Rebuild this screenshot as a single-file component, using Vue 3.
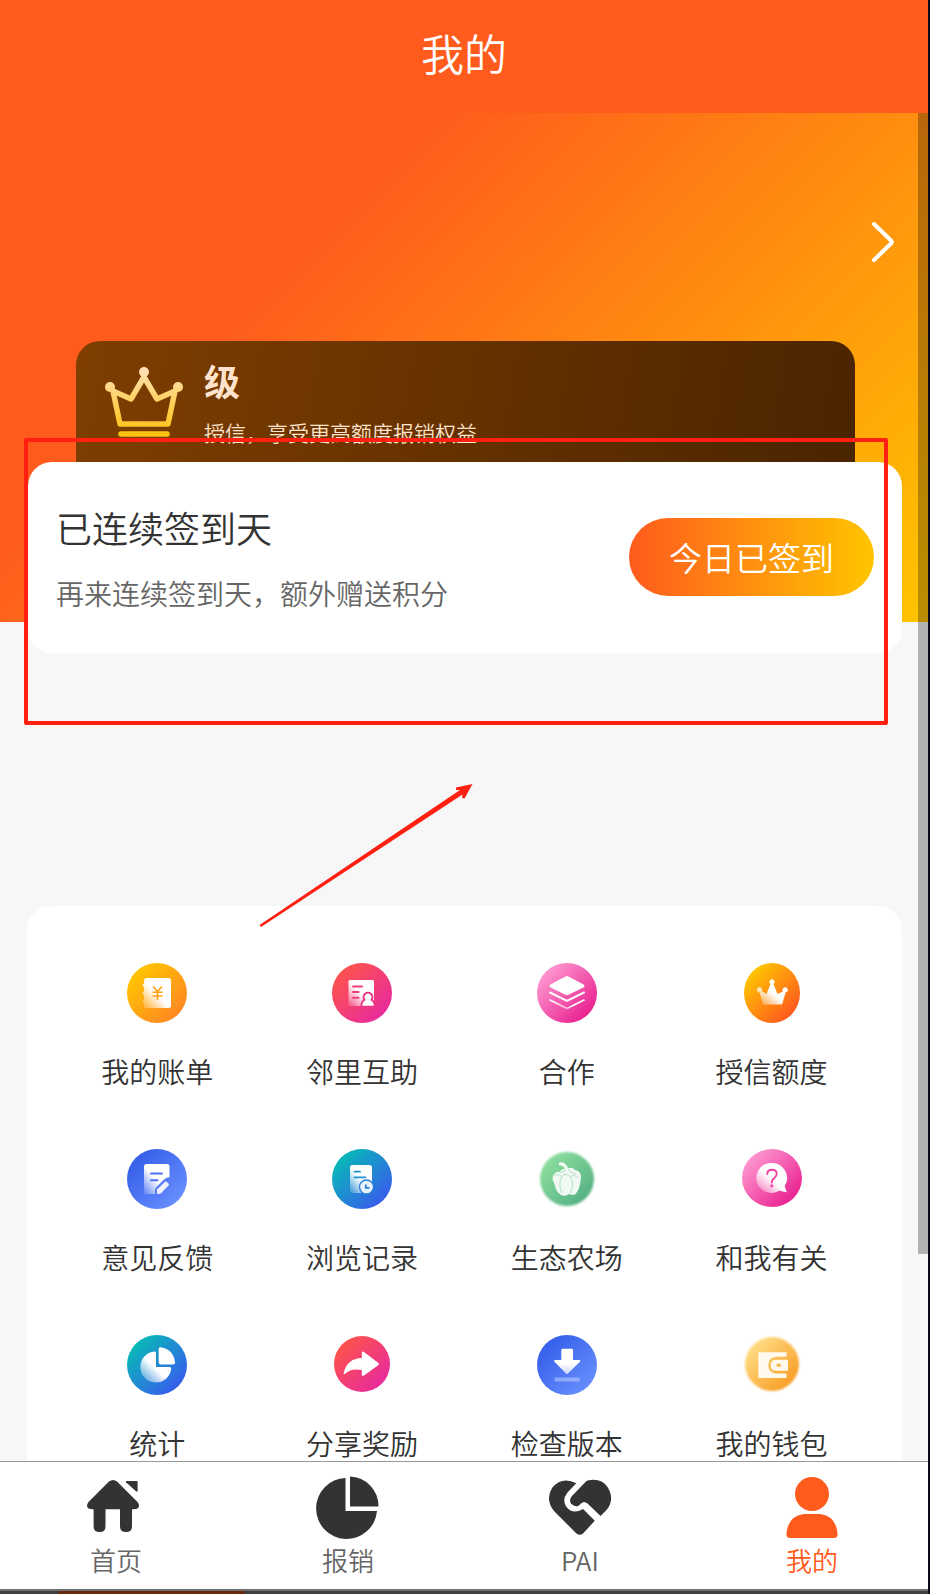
<script setup>
const services = [
  { id: 'bill', label: '我的账单', from: '#ffc800', to: '#ff8525' },
  { id: 'neighbor', label: '邻里互助', from: '#ff5548', to: '#e829a0' },
  { id: 'coop', label: '合作', from: '#ff9dd2', to: '#e81c8e' },
  { id: 'credit', label: '授信额度', from: '#ffcb00', to: '#ff5320', rx: 28 },
  { id: 'feedback', label: '意见反馈', from: '#325ce8', to: '#6a90ff' },
  { id: 'history', label: '浏览记录', from: '#05bdb5', to: '#3a58ef' },
  { id: 'farm', label: '生态农场', from: '#8fdf9e', to: '#53b083', rx: 27, ry: 27, soft: true },
  { id: 'related', label: '和我有关', from: '#ff9dd2', to: '#e81c8e', ry: 29, cy: 29 },
  { id: 'stats', label: '统计', from: '#05bdb5', to: '#3a58ef' },
  { id: 'share', label: '分享奖励', from: '#ff5548', to: '#e829a0', rx: 28, ry: 28, cy: 29 },
  { id: 'version', label: '检查版本', from: '#325ce8', to: '#6a90ff' },
  { id: 'wallet', label: '我的钱包', from: '#ffe08a', to: '#f89a20', rx: 27, ry: 27, cy: 29, soft: true },
]

const tabs = [
  { id: 'home', label: '首页' },
  { id: 'claim', label: '报销' },
  { id: 'pai', label: 'PAI' },
  { id: 'mine', label: '我的', active: true },
]
</script>

<template>
  <div class="screen">
    <header class="titlebar">
      <h1>我的</h1>
    </header>

    <main class="content">
      <section class="hero">
        <div class="profile">
          <button class="profile-link" type="button" aria-label="个人资料">
            <svg width="24" height="42" viewBox="0 0 24 42" fill="none" stroke="#fff" stroke-width="4" stroke-linecap="round" stroke-linejoin="round">
              <path d="M3 3 L20 19.500 Q21.500 21 20 22.500 L3 39" />
            </svg>
          </button>
        </div>
        <div class="member">
          <svg class="crown" width="78" height="72" viewBox="0 0 78 72">
            <defs>
              <linearGradient id="gold" gradientUnits="userSpaceOnUse" x1="0" y1="0" x2="0" y2="72">
                <stop offset="0" stop-color="#ffe2c0" />
                <stop offset=".55" stop-color="#ffcf55" />
                <stop offset="1" stop-color="#ffc107" />
              </linearGradient>
            </defs>
            <g fill="url(#gold)">
              <circle cx="39" cy="6" r="5" />
              <circle cx="5" cy="21" r="5" />
              <circle cx="73" cy="21" r="5" />
            </g>
            <g fill="none" stroke="url(#gold)" stroke-width="5.500" stroke-linejoin="round" stroke-linecap="round">
              <path d="M8 25 L15 58 H63 L70 25 L52 33 L39 11 L26 33 Z" />
              <path d="M16 68 H62" />
            </g>
          </svg>
          <div class="member-text">
            <strong>级</strong>
            <span>授信，享受更高额度报销权益</span>
          </div>
        </div>
      </section>

      <section class="checkin">
        <div class="checkin-text">
          <h2>已连续签到天</h2>
          <p>再来连续签到天，额外赠送积分</p>
        </div>
        <button class="checkin-button" type="button">今日已签到</button>
      </section>

      <section class="services">
        <a v-for="s in services" :key="s.id" class="service" href="#">
          <svg class="service-icon" viewBox="0 0 60 60">
            <defs>
              <linearGradient :id="'bg-' + s.id" x1=".1" y1=".1" x2=".9" y2=".9">
                <stop offset="0" :stop-color="s.from" />
                <stop offset="1" :stop-color="s.to" />
              </linearGradient>
              <linearGradient :id="'fg-' + s.id" x1="0" y1="1" x2=".6" y2=".4">
                <stop offset="0" stop-color="#fff" stop-opacity=".1" />
                <stop offset=".8" stop-color="#fff" />
              </linearGradient>
            </defs>
            <ellipse :class="{ soft: s.soft }" cx="30" :cy="s.cy || 30" :rx="s.rx || 30" :ry="s.ry || 30" :fill="`url(#bg-${s.id})`" />

            <g v-if="s.id === 'bill'">
              <path fill="url(#fg-bill)" d="M20 15 H41.500 Q44 15 44 17.500 V42.500 Q44 45 41.500 45 H17 V40 a1.800 1.800 0 0 1 0 -3.500 V32 a1.800 1.800 0 0 1 0 -3.500 V24 a1.800 1.800 0 0 1 0 -3.500 V18 Q17 15 20 15 Z" />
              <path d="M26 23.500 L30.500 28.500 L35 23.500 M30.500 28.500 V37 M25.500 29.300 H35.500 M25.500 33 H35.500" fill="none" stroke="#ffa216" stroke-width="1.600" />
            </g>

            <g v-else-if="s.id === 'neighbor'">
              <rect x="16.500" y="17" width="25.500" height="26" rx="1.500" fill="url(#fg-neighbor)" />
              <path d="M21 23.400 H30 M21 29 H26.500 M21 34.700 H26.500" stroke="#f03b7e" stroke-width="2" stroke-linecap="round" />
              <path d="M36 30.500 a3.800 3.800 0 0 1 2.200 6.700 Q41.800 38.500 41.800 42.800 H30.200 Q30.200 38.500 33.800 37.200 a3.800 3.800 0 0 1 2.200 -6.700 Z" fill="none" stroke="#ee3487" stroke-width="3.600" />
              <path d="M36 30.500 a3.800 3.800 0 0 1 2.200 6.700 Q41.800 38.500 41.800 42.800 H30.200 Q30.200 38.500 33.800 37.200 a3.800 3.800 0 0 1 2.200 -6.700 Z" fill="#fff" />
            </g>

            <g v-else-if="s.id === 'coop'">
              <path d="M28.500 13.500 Q30 12.700 31.500 13.500 L46.500 21.500 Q48.500 23 46.500 24.500 L31.500 31.800 Q30 32.600 28.500 31.800 L13.500 24.500 Q11.500 23 13.500 21.500 Z" fill="#fff" />
              <path d="M13 29.500 L30 38 L47 29.500" fill="none" stroke="#fff" stroke-width="2" stroke-linecap="round" />
              <path d="M13 37 L30 45.500 L47 37" fill="none" stroke="url(#fg-coop)" stroke-width="1.600" stroke-linecap="round" />
            </g>

            <g v-else-if="s.id === 'credit'" fill="url(#fg-credit)">
              <path d="M18 27 L24.500 31 L28.500 21 a2.500 2.500 0 1 1 3 0 L35.500 31 L41 28.500 a2.600 2.600 0 1 1 2.600 1 L40 41.500 H21 L17.500 29.500 a2.600 2.600 0 1 1 2 -1 Z" />
            </g>

            <g v-else-if="s.id === 'feedback'">
              <path d="M19.500 15 H40 Q42.500 15 42.500 17.500 V28 Q39 28.500 37 30.500 L29 38.500 Q27.800 40 28 45 H17 V17.500 Q17 15 19.500 15 Z" fill="url(#fg-feedback)" />
              <path d="M24 24.400 H35 M24 31.300 H30.500" stroke="#4b74f3" stroke-width="2" stroke-linecap="round" />
              <path d="M30 45 V40.500 L38 32.800 Q39 32 40 33 L41.500 34.500 Q42.500 35.500 41.500 36.500 L34 44.200 Q33 45 31.500 45 Z" fill="#fff" opacity=".9" />
            </g>

            <g v-else-if="s.id === 'history'">
              <rect x="18" y="16" width="22" height="28" rx="2.500" fill="url(#fg-history)" />
              <path d="M22.500 22.700 H28 M22.500 28.300 H33.500" stroke="#1f91cd" stroke-width="1.800" stroke-linecap="round" />
              <circle cx="34.500" cy="38" r="7" fill="#e9f3fb" stroke="#2a80d9" stroke-width="1.400" />
              <path d="M33.800 35.500 V38.800 H37.500" fill="none" stroke="#2a80d9" stroke-width="1.800" />
            </g>

            <g v-else-if="s.id === 'farm'">
              <path d="M22 13.500 Q28 12 31 19 Q36 18 38 21 Q44 22 44 28 Q43 41 38.500 45 Q36 47 32.500 45 Q28 48 24 46 Q19 43 17.500 35 Q14 29 17 25 Q20 22 22.500 23 Q24 20 28 19.500 Q26.500 16.500 22 16 Z" fill="#f0f9f3" />
              <path d="M17 27 Q21 24 24.500 27.500 Q29 23.500 33.500 27.500 Q37 25 42 29 M24.500 27.500 Q21 36 25 44 M33.500 27.500 Q38 35 33 44 M22.500 23 Q27 24 28.500 20 M31 20 Q34 25 39 25" fill="none" stroke="#a5d8b9" stroke-width=".8" />
            </g>

            <g v-else-if="s.id === 'related'">
              <path d="M30 14 a15 15 0 0 1 12.700 23 Q43.500 40 44.800 43.200 L37 41.800 A15 15 0 1 1 30 14 Z" fill="url(#fg-related)" />
              <path d="M25.300 25 Q25.300 20.800 30 20.800 Q34.700 20.800 34.700 25 Q34.700 27 32 29.300 Q29.800 31 29.800 33.500" fill="none" stroke="#f03f9c" stroke-width="1.900" stroke-linecap="round" />
              <circle cx="29.700" cy="36.800" r="1.500" fill="#f03f9c" />
            </g>

            <g v-else-if="s.id === 'stats'">
              <path d="M27.500 16.500 Q29 16.500 29 18 V32 H42.500 Q44.500 32 44.200 34 A15.500 15.500 0 1 1 27.500 16.500 Z" fill="url(#fg-stats)" />
              <path d="M31.700 14 Q31.700 12 33.800 12.300 Q46.500 14.500 48 27.300 Q48.200 29.400 46.200 29.400 H33.500 Q31.700 29.400 31.700 27.600 Z" fill="#fff" />
            </g>

            <g v-else-if="s.id === 'share'">
              <path d="M29.800 17.800 Q30.200 15.900 32 17 L46.500 28 Q47.500 29 46.500 30 L32 40.600 Q30.200 41.800 29.800 40 V35 Q19 33 13 38.800 Q11.500 39.800 11.700 38 Q15 23.500 29.800 23 Z" fill="#fff" />
            </g>

            <g v-else-if="s.id === 'version'">
              <path d="M25.500 13.700 H34.800 Q36 13.700 36 15 V25 H42.500 Q44 25.200 43 26.700 L31 38.500 Q30 39.500 29 38.500 L17.500 26.700 Q16.500 25.200 18 25 H24.300 V15 Q24.300 13.700 25.500 13.700 Z" fill="url(#fg-arrow)" />
              <rect x="17.500" y="42.500" width="25.300" height="4" rx="1" fill="#fff" opacity=".35" />
              <defs>
                <linearGradient id="fg-arrow" x1="0" y1="0" x2="0" y2="1">
                  <stop offset=".6" stop-color="#fff" />
                  <stop offset="1" stop-color="#fff" stop-opacity=".7" />
                </linearGradient>
              </defs>
            </g>

            <g v-else>
              <path d="M16.300 17.300 H44.500 V21.800 H35 Q26.300 22 26.300 30 Q26.300 38.300 35 38.500 H44.500 V43 H16.300 Z" fill="#fff9ee" />
              <path fill-rule="evenodd" d="M34 24.700 H46 V35.700 H34 Q28.700 35.700 28.700 30.200 Q28.700 24.700 34 24.700 Z M34.600 28.700 V31.800 H38.800 V28.700 Z" fill="#fff9ee" />
            </g>
          </svg>
          <span>{{ s.label }}</span>
        </a>
      </section>

      <div class="scroll-thumb"></div>
    </main>

    <nav class="tabbar">
      <a v-for="t in tabs" :key="t.id" class="tab" :class="{ active: t.active }" href="#">
        <svg class="tab-icon" viewBox="0 0 64 64" fill="currentColor">
          <g v-if="t.id === 'home'">
            <path d="M25 5.500 Q29 2.500 33 5.500 L53.500 26 Q56.500 30 53.500 32.500 Q52.500 33.300 48 33.300 V50.500 Q48 56 42 56 Q36 56 36 50.500 V33.300 H21.500 V50.500 Q21.500 56 15.600 56 Q9.600 56 9.600 50.500 V33.300 Q5.500 33.300 4.500 32.500 Q1.500 30 4.500 26 Z" />
            <path d="M42.500 5 H53 Q53.600 5 53.600 5.600 V15 Q53.300 16.300 52 15.300 L42 6.300 Q41.500 5.200 42.500 5 Z" />
          </g>
          <g v-else-if="t.id === 'claim'">
            <path d="M29.500 2 V35 H61 A30.500 30.500 0 1 1 29.500 2 Z" />
            <path d="M34 .500 A29.500 29.500 0 0 1 62.500 30.500 H34 Z" />
          </g>
          <g v-else-if="t.id === 'pai'">
            <path d="M28.300 7.300 L19.500 16.500 Q13.500 24 18.500 31 Q25 39 35 33 L46.800 44.800 L35 57.500 Q31.800 60 28.500 57.500 L6 35 Q-3 24 4 12 Q14 0 28.300 7.300 Z" />
            <path d="M39.500 4.500 Q53 1.500 59.500 11 Q67 23 59 33.500 L52.500 40 L39.500 27.500 Q36 24.500 33 27.500 Q29 32.500 24 28.500 Q20 24.500 24 20 L37 6.500 Q38.300 4.900 39.500 4.500 Z" />
          </g>
          <g v-else>
            <circle cx="32" cy="18" r="17" />
            <path d="M24 38 H40 Q56 40 57.600 57.500 Q57.800 62 54 62 H10 Q6.200 62 6.400 57.500 Q8 40 24 38 Z" />
          </g>
        </svg>
        <span>{{ t.label }}</span>
      </a>
    </nav>

    <div class="dock"><div class="dock-window"></div></div>

    <div class="callout-box"></div>
    <svg class="callout-arrow" width="218" height="148" viewBox="0 0 218 148" fill="#ff2012">
      <path d="M1.500 143 L202 8 L198 8 V5.500 L214.500 2 L206.500 16.500 L204 16 L204.500 12.500 L3 145 Z" />
    </svg>
  </div>
</template>

<style>
body {
  margin: 0;
  background: #0b0c1e;
}
</style>

<style scoped>
.screen {
  position: relative;
  box-sizing: border-box;
  display: flex;
  flex-direction: column;
  height: 100vh;
  border-right: 2px solid #0b0c1e;
  background: #f7f7f7;
  color: #333;
  font-family: "Noto Sans CJK SC", sans-serif;
  font-weight: 350;
}

h1, h2, p {
  margin: 0;
  font-weight: inherit;
}

a {
  color: inherit;
  text-decoration: none;
}

button {
  border: 0;
  font: inherit;
  color: inherit;
}

.titlebar {
  flex: none;
  padding: 22px 0 31px;
  background: #ff5b1d;
  color: #fff;
  text-align: center;
}

.titlebar h1 {
  font-size: 43px;
  line-height: 60px;
}

.content {
  position: relative;
  flex: 1;
  min-height: 0;
  overflow: hidden;
}

.hero {
  padding: 0 73px 121px 76px;
  background: linear-gradient(135deg, #ff5b1d 30%, #ffc500);
}

.profile {
  display: flex;
  justify-content: flex-end;
  margin-right: -40px;
  padding: 108px 0 78px;
}

.profile-link {
  padding: 0;
  background: none;
}

.profile-link svg {
  display: block;
}

.member {
  display: flex;
  align-items: flex-start;
  gap: 21px;
  padding: 25px 29px 53px;
  border-radius: 24px;
  background: linear-gradient(100deg, #7f3e00, #4a2400);
  color: #ffe3cc;
}

.member-text {
  display: flex;
  flex-direction: column;
  gap: 22px;
}

.member-text strong {
  font-size: 36px;
  line-height: 28px;
  font-weight: 700;
}

.member-text span {
  font-size: 21px;
  line-height: 32px;
}

.checkin {
  position: relative;
  display: flex;
  align-items: center;
  justify-content: space-between;
  margin: -160px 26px 0 28px;
  padding: 39px 28px 40px;
  border-radius: 24px;
  background: #fff;
}

.checkin-text {
  display: flex;
  flex-direction: column;
  gap: 20px;
}

.checkin h2 {
  font-size: 36px;
  line-height: 52px;
}

.checkin p {
  color: #666;
  font-size: 28px;
  line-height: 40px;
}

.checkin-button {
  padding: 15px 40px;
  border-radius: 39px;
  background: linear-gradient(90deg, #ff5b1d, #ffc500);
  color: #fff;
  font-size: 33px;
  line-height: 48px;
}

.services {
  display: grid;
  grid-template-columns: repeat(4, 1fr);
  row-gap: 58px;
  margin: 253px 26px 0 27px;
  padding: 57px 28px;
  border-radius: 24px;
  background: #fff;
}

.service {
  display: flex;
  flex-direction: column;
  align-items: center;
  gap: 28px;
  font-size: 28px;
  line-height: 40px;
}

.service-icon {
  width: 60px;
  height: 60px;
}

.soft {
  filter: blur(1px);
}

.scroll-thumb {
  position: absolute;
  top: 0;
  right: 0;
  width: 10px;
  height: calc(100% - 207px);
  background: rgba(0, 0, 0, 0.28);
}

.tabbar {
  flex: none;
  display: grid;
  grid-template-columns: repeat(4, 1fr);
  padding: 14px 0;
  border-top: 1px solid #999;
  background: #fff;
}

.tab {
  display: flex;
  flex-direction: column;
  align-items: center;
  gap: 5px;
  color: #333;
  font-size: 26px;
  line-height: 30px;
}

.tab span {
  color: #666;
}

.tab.active,
.tab.active span {
  color: #ff5b1d;
}

.tab-icon {
  width: 64px;
  height: 64px;
}

.dock {
  flex: none;
  padding-left: 58px;
  border-top: 2px solid #707070;
  background: #404142;
}

.dock-window {
  width: 187px;
  height: 3px;
  background: #662a0c;
}

.callout-box {
  position: absolute;
  box-sizing: border-box;
  top: 438px;
  left: 24px;
  right: 40px;
  height: 287px;
  border: 4px solid #ff2012;
  border-radius: 2px;
  pointer-events: none;
}

.callout-arrow {
  position: absolute;
  top: 782px;
  left: 258px;
  pointer-events: none;
}
</style>
